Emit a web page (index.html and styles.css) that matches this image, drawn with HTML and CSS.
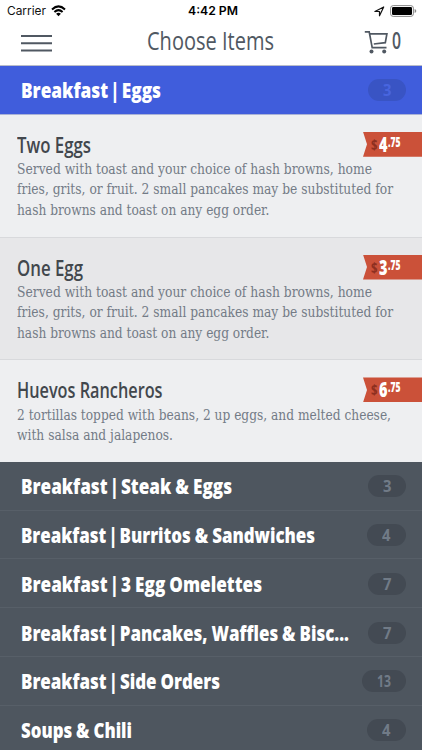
FILE: index.html
```
<!DOCTYPE html>
<html lang="en">
<head>
<meta charset="utf-8">
<title>Choose Items</title>
<link rel="stylesheet" href="styles.css">
</head>
<body>
<header>
  <div class="status">
    <span class="carrier"><span data-w="39">Carrier</span></span>
    <svg class="wifi" width="15" height="12" viewBox="0 0 15 12"><g fill="none" stroke="#000" stroke-width="2"><path d="M1 4.4Q7.5-1.7 14 4.4"/><path d="M3.4 7Q7.5 3.2 11.6 7"/></g><path d="M5.1 8.7Q7.5 6.7 9.9 8.7L7.5 11.2Z"/></svg>
    <span class="time"><span data-w="50">4:42 PM</span></span>
    <svg class="location" width="11" height="11" viewBox="0 0 11 11"><path d="M.9 5.5 9.7 1 5.5 9.8V5.5Z" fill="none" stroke="#111" stroke-width="1.2" stroke-linejoin="round"/></svg>
    <svg class="battery" width="27" height="12" viewBox="0 0 27 12"><rect x=".6" y=".6" width="22.8" height="10.8" rx="2.6" fill="none" stroke="#888"/><rect x="2" y="2" width="20" height="8" rx="1.2"/><path d="M24.6 4v4q1.7-.6 1.7-2T24.6 4Z" fill="#888"/></svg>
  </div>
  <div class="nav">
    <svg class="menu" width="31" height="18" viewBox="0 0 31 18"><path d="M0 2h31M0 9.3h31M0 16.6h31" stroke="#505862" stroke-width="2"/></svg>
    <h1><span data-w="127">Choose Items</span></h1>
    <svg class="cart" width="25" height="24" viewBox="0 0 25 24"><path d="M.8 1.8H5.2L8.2 17.7H22.5M6 3.9H22.9L21.3 12.7 9.8 14" fill="none" stroke="#505862" stroke-width="1.7"/><circle cx="7.5" cy="21.5" r="2" fill="#505862"/><circle cx="20.2" cy="21.5" r="2" fill="#505862"/></svg>
    <span class="total"><span data-w="9">0</span></span>
  </div>
</header>
<main>
  <section class="row active"><h2><span data-w="140">Breakfast<i> | </i>Eggs</span></h2><span class="pill"><span data-w="8.5">3</span></span></section>
  <article class="item">
    <h3><span data-w="74">Two Eggs</span></h3>
    <p><span data-w="355">Served with toast and your choice of hash browns, home</span></p>
    <p><span data-w="376">fries, grits, or fruit. 2 small pancakes may be substituted for</span></p>
    <p><span data-w="252.5">hash browns and toast on any egg order.</span></p>
    <div class="price"><small><span data-w="6.5">$</span></small><b><span data-w="8.5">4</span></b><sup><span data-w="12.5">.75</span></sup></div>
  </article>
  <article class="item shaded">
    <h3><span data-w="66">One Egg</span></h3>
    <p><span data-w="355">Served with toast and your choice of hash browns, home</span></p>
    <p><span data-w="376">fries, grits, or fruit. 2 small pancakes may be substituted for</span></p>
    <p><span data-w="252.5">hash browns and toast on any egg order.</span></p>
    <div class="price"><small><span data-w="6.5">$</span></small><b><span data-w="8.5">3</span></b><sup><span data-w="12.5">.75</span></sup></div>
  </article>
  <article class="item short">
    <h3><span data-w="145.5">Huevos Rancheros</span></h3>
    <p><span data-w="374">2 tortillas topped with beans, 2 up eggs, and melted cheese,</span></p>
    <p><span data-w="156">with salsa and jalapenos.</span></p>
    <div class="price"><small><span data-w="6.5">$</span></small><b><span data-w="8.5">6</span></b><sup><span data-w="12.5">.75</span></sup></div>
  </article>
  <section class="row"><h2><span data-w="211">Breakfast<i> | </i>Steak &amp; Eggs</span></h2><span class="pill"><span data-w="8.5">3</span></span></section>
  <section class="row"><h2><span data-w="294">Breakfast<i> | </i>Burritos &amp; Sandwiches</span></h2><span class="pill four"><span data-w="8.5">4</span></span></section>
  <section class="row"><h2><span data-w="241">Breakfast<i> | </i>3 Egg Omelettes</span></h2><span class="pill"><span data-w="8.5">7</span></span></section>
  <section class="row"><h2><span data-w="328">Breakfast<i> | </i>Pancakes, Waffles &amp; Bisc...</span></h2><span class="pill"><span data-w="8.5">7</span></span></section>
  <section class="row"><h2><span data-w="199">Breakfast<i> | </i>Side Orders</span></h2><span class="pill wide"><span data-w="14">13</span></span></section>
  <section class="row"><h2><span data-w="111">Soups &amp; Chili</span></h2><span class="pill four"><span data-w="8.5">4</span></span></section>
</main>
<script src="fit.js"></script>
</body>
</html>
```
FILE: styles.css
```
* { box-sizing: border-box; }
body { margin: 0; width: 422px; height: 750px; overflow: hidden; background: #fff; font-family: "Open Sans", "Noto Sans", sans-serif; }
h1, h2, h3, p { margin: 0; font-weight: normal; }
[data-w] { display: inline-block; white-space: nowrap; transform-origin: left center; }
header { height: 66px; border-bottom: 1px solid #b9bdca; }
.status { display: grid; grid-template-columns: 44px 137px 186px 16px 27px; height: 22px; padding-left: 7px; align-items: center; justify-content: start; font-family: Inter, sans-serif; color: #111; }
.carrier { font-size: 12px; line-height: 22px; }
.time { font-size: 12px; font-weight: 600; line-height: 22px; color: #000; }
.nav { display: grid; grid-template-columns: 126px 217px 28px 20px; height: 43px; padding-left: 21px; color: #505862; }
.menu { margin-top: 12px; }
h1 { font-size: 26px; line-height: 36px; }
.cart { margin-top: 8px; }
.total { font-size: 23px; font-weight: 600; line-height: 37px; }
.row { display: flex; justify-content: space-between; align-items: center; height: 48.8px; padding: 1px 16px 0 21px; background: #4e565f; border-bottom: 1px solid #575f68; color: #fff; }
.row h2 { width: 330px; font-size: 20.5px; font-weight: 800; line-height: 46px; word-spacing: -.5px; }
.row i { font-style: normal; word-spacing: -2.5px; }
.pill { width: 38px; height: 22px; border-radius: 11px; padding-left: 15px; background: #434a53; color: #717b87; font-size: 16.5px; font-weight: 700; line-height: 22px; }
.pill.four { width: 39px; }
.pill.wide { width: 44px; }
.row.active { padding-top: 0; background: #405ddc; border-color: #a9b2d6; }
.active .pill { background: #3954c4; color: #4865df; }
.item { position: relative; height: 122.8px; padding: 17px 0 0 17px; background: #eeeff1; border-bottom: 1px solid #d8d9dc; }
.item.shaded { background: #e7e7e9; }
.item.short { height: 101.5px; border-bottom: 0; }
.short h3 { margin-bottom: .5px; }
h3 { font-size: 21px; font-weight: 600; line-height: 27px; color: #42474d; }
.item p { height: 20.6px; font: 14.5px/20.6px "DejaVu Serif", serif; color: #737b86; }
.price { position: absolute; right: 0; top: 17px; display: flex; width: 59px; height: 25px; padding-left: 7.5px; background: #cb5139; clip-path: polygon(0 0, 100% 0, 100% 100%, 0 100%, 4px 50%); color: #fff; }
.price small { width: 8.5px; font-size: 14px; font-weight: 700; line-height: 26px; color: #8d2f20; }
.price b { width: 9px; font-size: 21px; font-weight: 800; line-height: 24px; }
.price sup { font-size: 14px; font-weight: 800; line-height: 19px; vertical-align: baseline; }
```
FILE: fit.js
```
// Condense each label to the width given in its data-w attribute.
document.querySelectorAll("[data-w]").forEach(function (el) {
  var natural = el.getBoundingClientRect().width;
  var target = parseFloat(el.dataset.w);
  el.style.transform = "scaleX(" + target / natural + ")";
  // Give back the unused width so the layout box matches the drawn text.
  el.style.marginRight = target - natural + "px";
});
```
